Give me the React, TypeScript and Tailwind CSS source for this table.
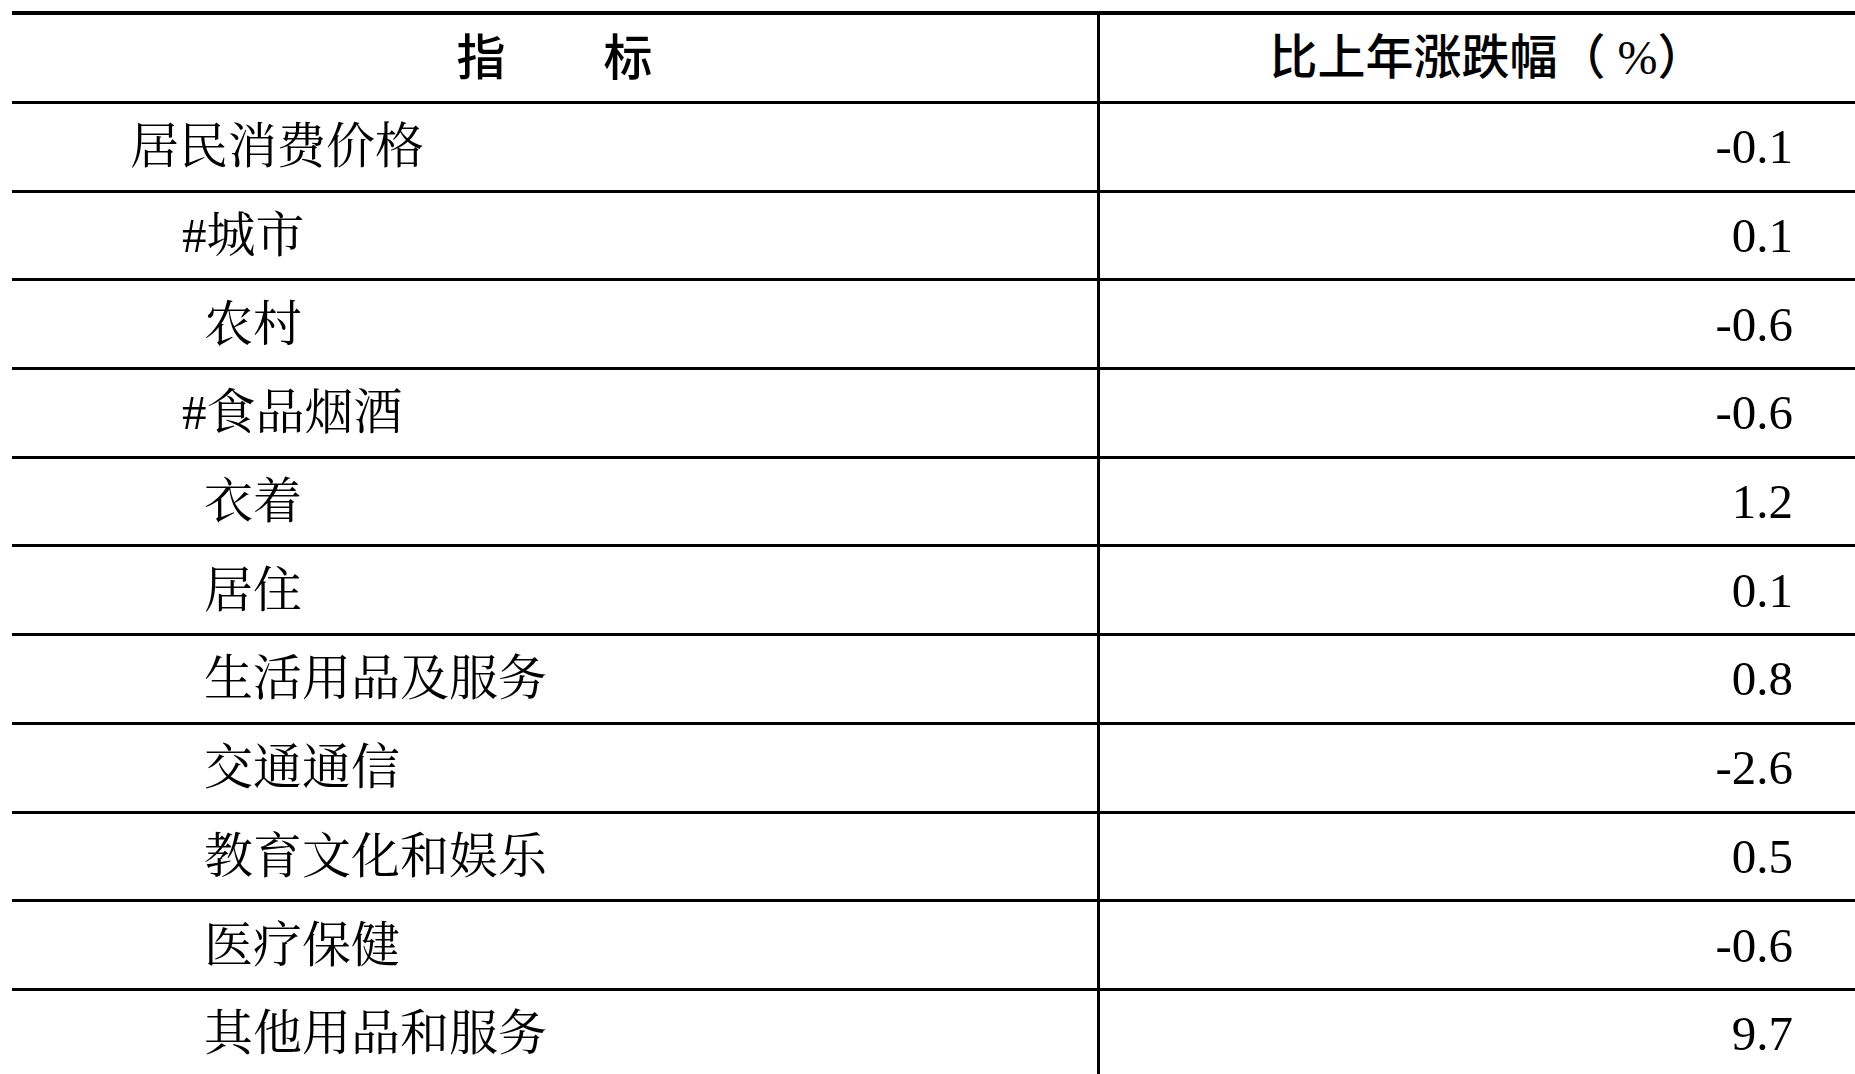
import React from "react";

type Row = { label: string; value: string; level: 0 | 1 | 2 };

const rows: Row[] = [
  { label: "居民消费价格", value: "-0.1", level: 0 },
  { label: "#城市", value: "0.1", level: 1 },
  { label: "农村", value: "-0.6", level: 2 },
  { label: "#食品烟酒", value: "-0.6", level: 1 },
  { label: "衣着", value: "1.2", level: 2 },
  { label: "居住", value: "0.1", level: 2 },
  { label: "生活用品及服务", value: "0.8", level: 2 },
  { label: "交通通信", value: "-2.6", level: 2 },
  { label: "教育文化和娱乐", value: "0.5", level: 2 },
  { label: "医疗保健", value: "-0.6", level: 2 },
  { label: "其他用品和服务", value: "9.7", level: 2 },
];

const indent: Record<number, string> = {
  0: "pl-[118px]",
  1: "pl-[170px]",
  2: "pl-[192px]",
};

export default function App() {
  return (
    <div className="h-screen w-full overflow-hidden bg-white text-black">
      <div className="ml-[12px] mt-[11px] flex flex-col">
        {/* header */}
        <div className="flex h-[93px] border-t-[4px] border-b-[3px] border-black">
          <div className="flex w-[1088px] shrink-0 items-center justify-center border-r-[3px] border-black font-['Liberation_Sans','Noto_Sans_CJK_SC',sans-serif] text-[49px] font-medium leading-none">
            指{"\u3000\u3000"}标
          </div>
          <div className="flex flex-1 items-center justify-center pl-[20px] font-['Liberation_Sans','Noto_Sans_CJK_SC',sans-serif] text-[48px] font-medium leading-none">
            <span>比上年涨跌幅（</span>
            <span className="whitespace-pre font-['Liberation_Serif',serif] font-normal"> %</span>
            <span>）</span>
          </div>
        </div>
        {rows.map((r, i) => (
          <div
            key={i}
            className="flex h-[88.7px] shrink-0 border-b-[3px] border-black"
          >
            <div
              className={`flex w-[1088px] shrink-0 items-center border-r-[3px] border-black font-['Liberation_Serif','Noto_Serif_CJK_SC','Noto_Sans_CJK_SC',serif] text-[49px] leading-none ${indent[r.level]}`}
            >
              {r.label}
            </div>
            <div className="flex flex-1 items-center justify-end pr-[62px] font-['Liberation_Serif',serif] text-[49px] leading-none">
              {r.value}
            </div>
          </div>
        ))}
      </div>
    </div>
  );
}
